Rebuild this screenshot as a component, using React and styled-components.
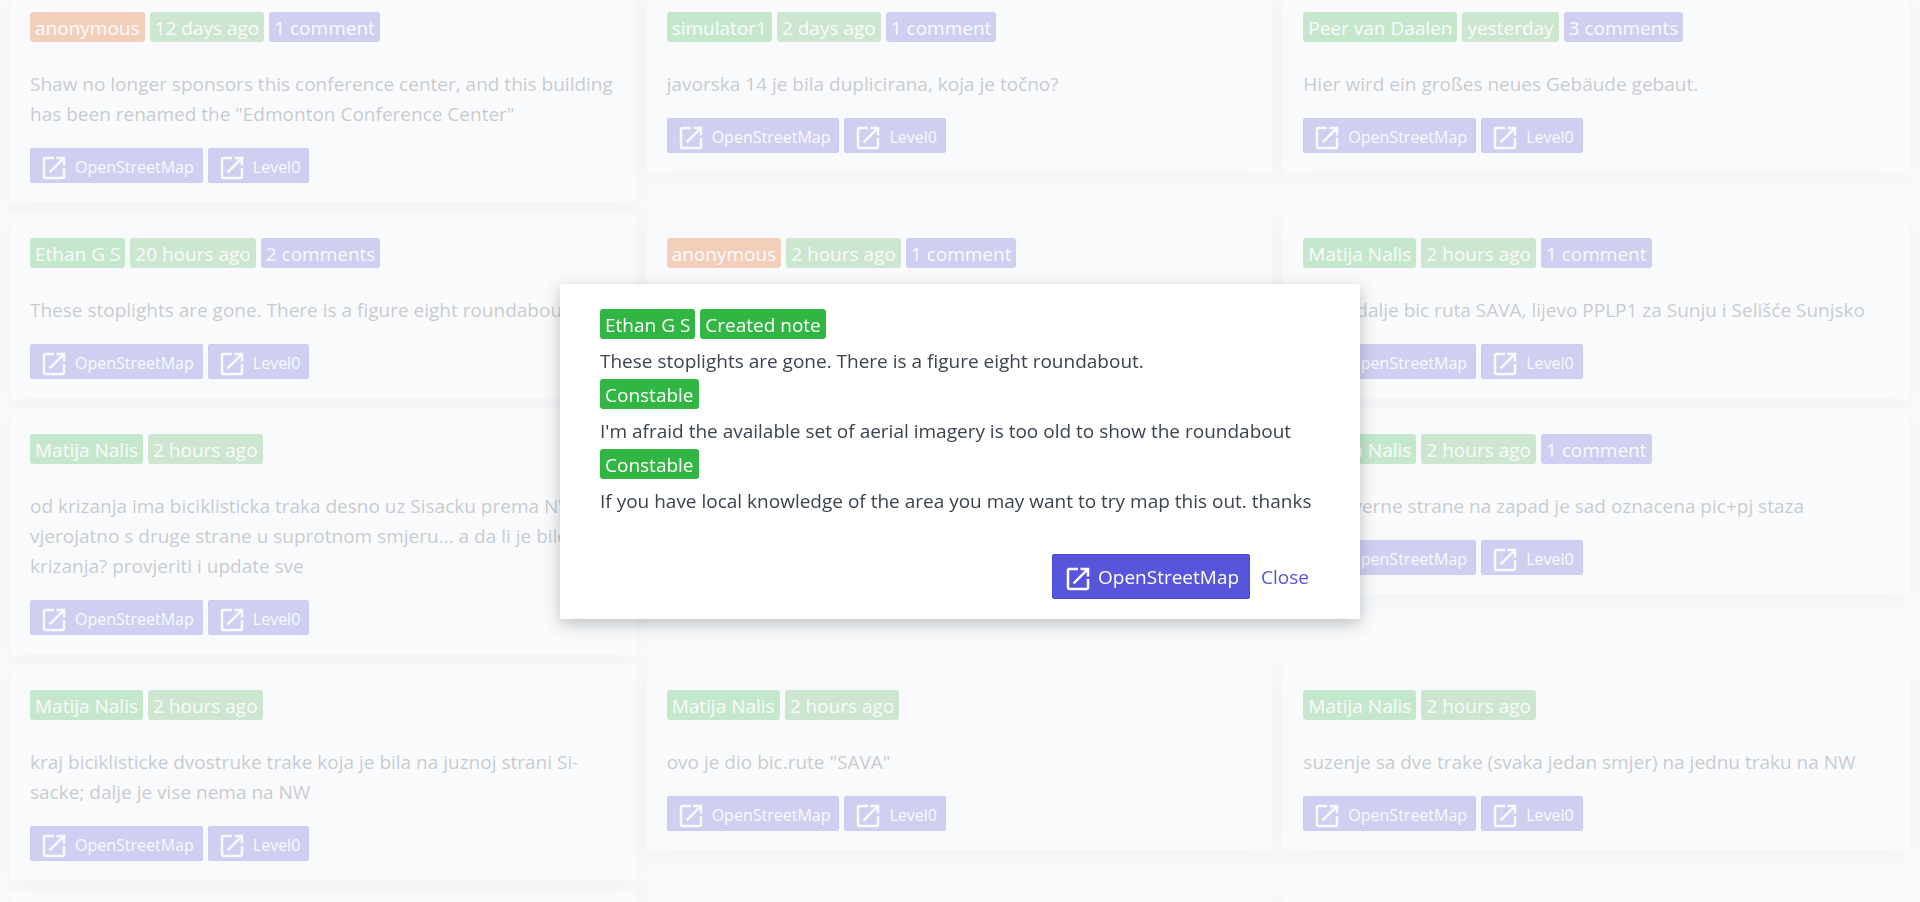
import React from "react";
import styled, { createGlobalStyle, css } from "styled-components";

const GlobalStyle = createGlobalStyle`
  *, *::before, *::after { box-sizing: border-box; }
  body {
    margin: 0;
    background: #fff;
    color: #3b4351;
    font-family: "Segoe UI", "Open Sans", sans-serif;
    font-size: 19px;
    line-height: 30px;
  }
`;

const tones = {
  anonymous: "#e85600",
  user: "#32b643",
  age: "#4caf50",
  comments: "#5755d9",
};

const Page = styled.main`
  height: 100vh;
  overflow: hidden;
`;

/* The list is scrolled slightly past the top of its first row. */
const NoteGrid = styled.div`
  display: grid;
  grid-template-columns: repeat(3, minmax(0, 1fr));
  align-items: start;
  gap: 10px;
  margin-top: -13px;
  padding: 0 10px;
`;

const Card = styled.article`
  padding: 25px 20px 20px;
  border-radius: 2px;
  background: #fff;
  box-shadow: 0 6px 25px rgba(48, 55, 66, 0.15);
`;

const TagRow = styled.div`
  display: flex;
  gap: 5px;
`;

const Tag = styled.span`
  padding: 4px 5px 1px;
  border-radius: 3px;
  background: ${(p) => tones[p.$tone]};
  color: #fff;
  line-height: 25px;
  white-space: nowrap;
`;

const CardText = styled.p`
  margin: 27px 0 19px;
`;

const Actions = styled.div`
  display: flex;
  gap: 5px;
`;

const buttonBase = css`
  display: inline-flex;
  align-items: center;
  border: 1px solid #4b48d6;
  border-radius: 2px;
  background: #5755d9;
  color: #fff;
  font-family: inherit;
  text-decoration: none;
  white-space: nowrap;
`;

const LinkButton = styled.a`
  ${buttonBase}
  gap: ${(p) => (p.$small ? "6px" : "5px")};
  height: ${(p) => (p.$small ? "35px" : "45px")};
  padding: ${(p) => (p.$small ? "2px 8px 0" : "2px 10px 0")};
  font-size: ${(p) => (p.$small ? "16px" : "19px")};
`;

const CloseButton = styled.button`
  ${buttonBase}
  height: 45px;
  padding: 2px 10px 0;
  border-color: transparent;
  background: transparent;
  color: #5755d9;
  font-size: 19px;
  cursor: pointer;
`;

const Icon = styled.svg`
  flex: none;
  width: 30px;
  height: 30px;
  margin-top: 3px;
  fill: currentColor;
`;

const Overlay = styled.div`
  position: fixed;
  inset: 0;
  display: flex;
  align-items: center;
  justify-content: center;
  background: rgba(247, 248, 249, 0.75);
`;

const Dialog = styled.section`
  width: 100%;
  max-width: 800px;
  padding: 25px 40px 20px;
  border-radius: 2px;
  background: #fff;
  box-shadow: 0 5px 16px rgba(48, 55, 66, 0.3);
`;

const CommentText = styled.p`
  margin: 7px 0 3px;
`;

const DialogFooter = styled.footer`
  display: flex;
  justify-content: flex-end;
  padding-top: 35px;
`;

const notes = [
  { user: "", age: "12 days ago", comments: "1 comment", text: 'Shaw no longer sponsors this conference center, and this building has been renamed the "Edmonton Conference Center"' },
  { user: "simulator1", age: "2 days ago", comments: "1 comment", text: "javorska 14 je bila duplicirana, koja je točno?" },
  { user: "Peer van Daalen", age: "yesterday", comments: "3 comments", text: "Hier wird ein großes neues Gebäude gebaut." },
  { user: "Ethan G S", age: "20 hours ago", comments: "2 comments", text: "These stoplights are gone. There is a figure eight roundabout." },
  { user: "", age: "2 hours ago", comments: "1 comment", text: "nova biciklisticka staza" },
  { user: "Matija Nalis", age: "2 hours ago", comments: "1 comment", text: "ovdje dalje bic ruta SAVA, lijevo PPLP1 za Sunju i Selišće Sunjsko" },
  { user: "Matija Nalis", age: "2 hours ago", text: "od krizanja ima biciklisticka traka desno uz Sisacku prema NW, vjerojatno s druge strane u suprotnom smjeru... a da li je bilo i do krizanja? provjeriti i update sve" },
  { user: "Matija Nalis", age: "2 hours ago", text: "bic ruta SAVA" },
  { user: "Matija Nalis", age: "2 hours ago", comments: "1 comment", text: "sa sjeverne strane na zapad je sad oznacena pic+pj staza" },
  { user: "Matija Nalis", age: "2 hours ago", text: "kraj biciklisticke dvostruke trake koja je bila na juznoj strani Si\u00ADsacke; dalje je vise nema na NW" },
  { user: "Matija Nalis", age: "2 hours ago", text: 'ovo je dio bic.rute "SAVA"' },
  { user: "Matija Nalis", age: "2 hours ago", text: "suzenje sa dve trake (svaka jedan smjer) na jednu traku na NW" },
  { user: "Matija Nalis", age: "2 hours ago", text: "bic ruta SAVA" },
  { user: "Matija Nalis", age: "2 hours ago", text: "bic ruta SAVA" },
  { user: "Matija Nalis", age: "2 hours ago", text: "bic ruta SAVA" },
];

const thread = [
  { user: "Ethan G S", action: "Created note", text: "These stoplights are gone. There is a figure eight roundabout." },
  { user: "Constable", text: "I'm afraid the available set of aerial imagery is too old to show the roundabout" },
  { user: "Constable", text: "If you have local knowledge of the area you may want to try map this out. thanks" },
];

function ExternalLink({ small, children }) {
  return (
    <LinkButton href="#" $small={small}>
      <Icon viewBox="0 0 24 24" aria-hidden="true">
        <path d="M19 19H5V5h7V3H5c-1.11 0-2 .9-2 2v14c0 1.1.89 2 2 2h14c1.1 0 2-.9 2-2v-7h-2v7zM14 3v2h3.59l-9.83 9.83 1.41 1.41L19 6.41V10h2V3h-7z" />
      </Icon>
      {children}
    </LinkButton>
  );
}

function NoteCard({ note }) {
  return (
    <Card>
      <TagRow>
        <Tag $tone={note.user ? "user" : "anonymous"}>{note.user || "anonymous"}</Tag>
        <Tag $tone="age">{note.age}</Tag>
        {note.comments && <Tag $tone="comments">{note.comments}</Tag>}
      </TagRow>
      <CardText>{note.text}</CardText>
      <Actions>
        <ExternalLink small>OpenStreetMap</ExternalLink>
        <ExternalLink small>Level0</ExternalLink>
      </Actions>
    </Card>
  );
}

export default function App() {
  return (
    <Page>
      <GlobalStyle />
      <NoteGrid>
        {notes.map((note, i) => (
          <NoteCard key={i} note={note} />
        ))}
      </NoteGrid>
      <Overlay>
        <Dialog role="dialog" aria-modal="true" aria-label="Note comments">
          {thread.map((entry, i) => (
            <div key={i}>
              <TagRow>
                <Tag $tone="user">{entry.user}</Tag>
                {entry.action && <Tag $tone="user">{entry.action}</Tag>}
              </TagRow>
              <CommentText>{entry.text}</CommentText>
            </div>
          ))}
          <DialogFooter>
            <ExternalLink>OpenStreetMap</ExternalLink>
            <CloseButton type="button">Close</CloseButton>
          </DialogFooter>
        </Dialog>
      </Overlay>
    </Page>
  );
}
